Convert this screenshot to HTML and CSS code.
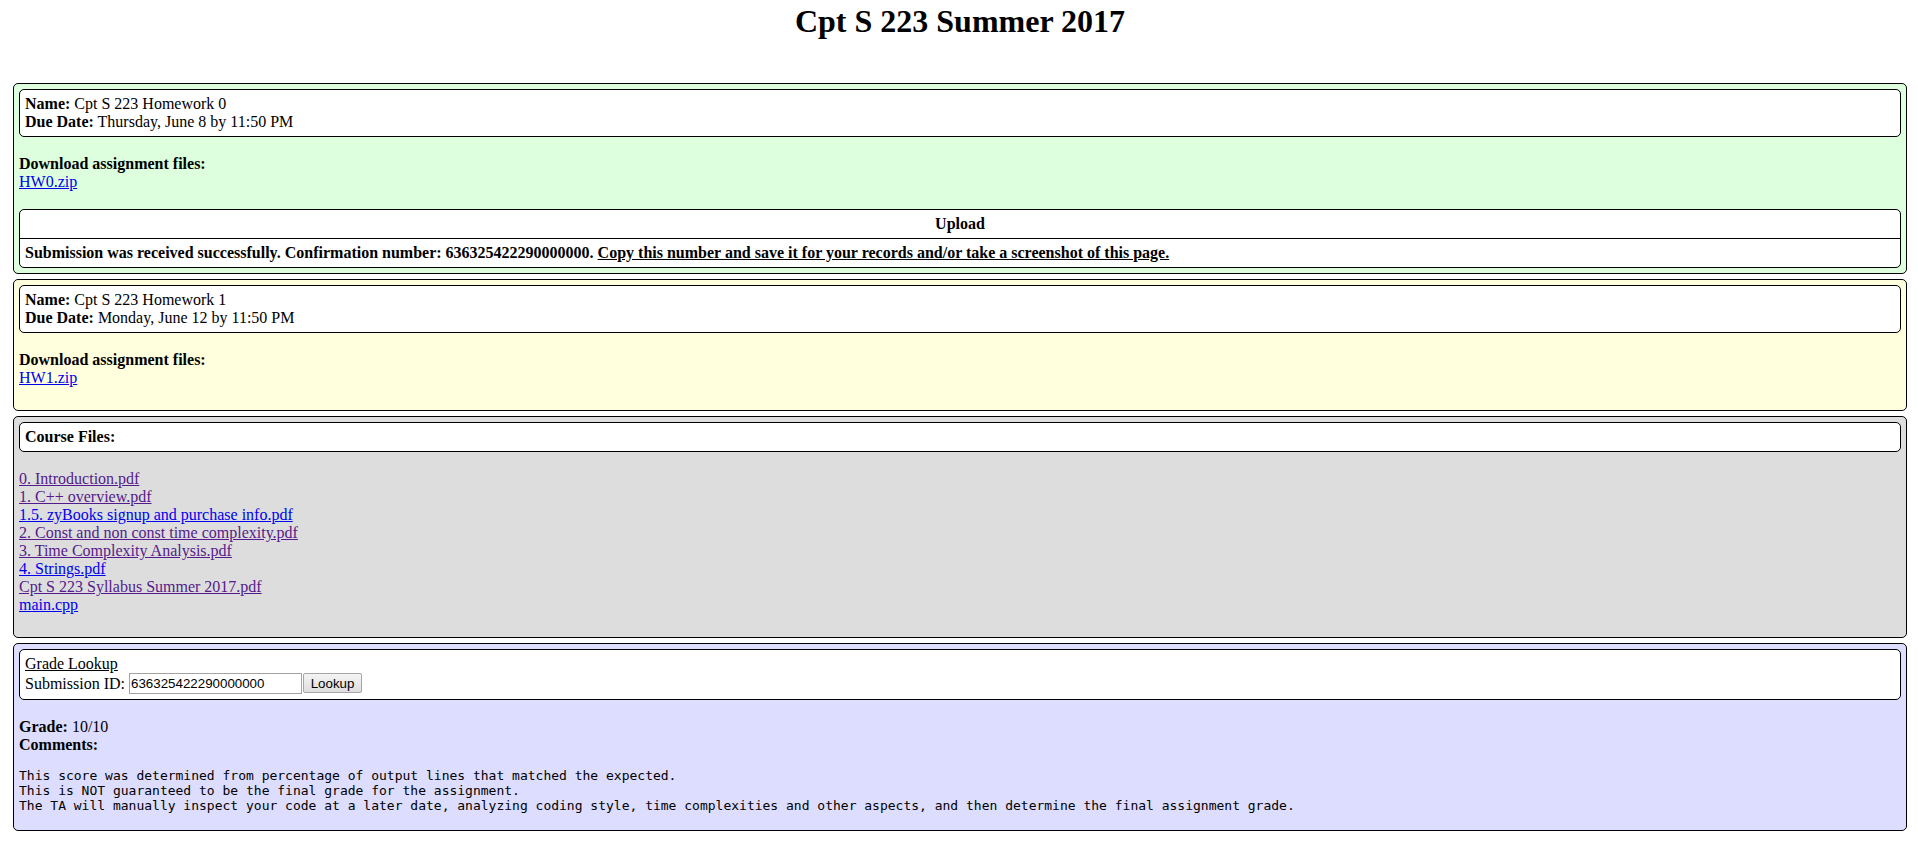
FILE: index.html
```html
<!DOCTYPE html>
<html>
<head>
<meta charset="utf-8">
<title>Cpt S 223 Summer 2017</title>
<link rel="stylesheet" href="styles.css">
</head>
<body>
<h1 class="title">Cpt S 223 Summer 2017</h1>

<div class="panel panel-green">
  <div class="card">
    <b>Name:</b> Cpt S 223 Homework 0<br>
    <b>Due Date:</b> Thursday, June 8 by 11:50 PM
  </div>
  <div class="section">
    <b>Download assignment files:</b><br>
    <a class="link" href="#hw0">HW0.zip</a>
  </div>
  <table class="upload">
    <tr><th>Upload</th></tr>
    <tr><td><b>Submission was received successfully. Confirmation number: 636325422290000000. <u>Copy this number and save it for your records and/or take a screenshot of this page.</u></b></td></tr>
  </table>
</div>

<div class="panel panel-yellow">
  <div class="card">
    <b>Name:</b> Cpt S 223 Homework 1<br>
    <b>Due Date:</b> Monday, June 12 by 11:50 PM
  </div>
  <div class="section">
    <b>Download assignment files:</b><br>
    <a class="link" href="#hw1">HW1.zip</a>
  </div>
</div>

<div class="panel panel-grey">
  <div class="card">
    <b>Course Files:</b>
  </div>
  <div class="section">
    <a class="link visited" href="#f0">0. Introduction.pdf</a><br>
    <a class="link visited" href="#f1">1. C++ overview.pdf</a><br>
    <a class="link" href="#f15">1.5. zyBooks signup and purchase info.pdf</a><br>
    <a class="link visited" href="#f2">2. Const and non const time complexity.pdf</a><br>
    <a class="link visited" href="#f3">3. Time Complexity Analysis.pdf</a><br>
    <a class="link" href="#f4">4. Strings.pdf</a><br>
    <a class="link visited" href="#f5">Cpt S 223 Syllabus Summer 2017.pdf</a><br>
    <a class="link" href="#f6">main.cpp</a>
  </div>
</div>

<div class="panel panel-blue">
  <div class="card">
    <u>Grade Lookup</u><br>
    <span class="lookup-row">Submission ID: <input class="sub-input" type="text" value="636325422290000000"><button class="sub-btn" type="button">Lookup</button></span>
  </div>
  <div class="grade">
    <b>Grade:</b> 10/10<br>
    <b>Comments:</b>
  </div>
  <pre class="comments">This score was determined from percentage of output lines that matched the expected.
This is NOT guaranteed to be the final grade for the assignment.
The TA will manually inspect your code at a later date, analyzing coding style, time complexities and other aspects, and then determine the final assignment grade.</pre>
</div>
</body>
</html>
```

FILE: styles.css
```css
html, body {
  background: #fff;
}
body {
  margin: 0;
  padding: 3px 11px 0 13px;
  font-family: "Liberation Serif", "Times New Roman", serif;
  font-size: 16px;
  line-height: 18px;
  color: #000;
}
.title {
  margin: 0 0 43px;
  font-size: 32px;
  line-height: 37px;
  font-weight: bold;
  text-align: center;
}
.panel {
  border: 1px solid #000;
  border-radius: 5px;
  padding: 5px;
  margin-bottom: 5px;
}
.panel-green { background: #ddffdd; }
.panel-yellow { background: #ffffdd; }
.panel-grey { background: #dddddd; }
.panel-blue { background: #ddddff; }
.card {
  background: #fff;
  border: 1px solid #000;
  border-radius: 5px;
  padding: 5px;
}
.section {
  margin: 18px 0 18px;
}
.link {
  color: #0000ee;
  text-decoration: underline;
}
.link.visited {
  color: #551a8b;
}
.upload {
  width: 100%;
  border-collapse: separate;
  border-spacing: 0;
  border: 1px solid #000;
  border-radius: 5px;
  background: #fff;
  font-size: 16px;
  line-height: 18px;
}
.upload th {
  padding: 5px;
  text-align: center;
  border-bottom: 1px solid #000;
  font-weight: bold;
}
.upload td {
  padding: 5px;
  text-align: left;
}
.lookup-row {
  display: inline-block;
  line-height: 21px;
  height: 21px;
}
.sub-input {
  box-sizing: border-box;
  width: 173px;
  height: 21px;
  margin: 0;
  padding: 1px 1px;
  border: 1px solid #a3a3a3;
  font-family: "Liberation Sans", Arial, sans-serif;
  font-size: 13.33px;
  color: #000;
  background: #fff;
  vertical-align: top;
}
.sub-btn {
  box-sizing: border-box;
  width: 59px;
  height: 20px;
  margin: 0 0 0 1px;
  padding: 0 6px;
  border: 1px solid #a6a6a6;
  border-radius: 2px;
  background: linear-gradient(#f4f4f4, #dedede);
  font-family: "Liberation Sans", Arial, sans-serif;
  font-size: 13.33px;
  color: #000;
  vertical-align: top;
}
.grade {
  margin-top: 18px;
  line-height: 18.4px;
}
.comments {
  margin: 13px 0 12px;
  font-family: "DejaVu Sans Mono", monospace;
  font-size: 13px;
  line-height: 15px;
}
```
